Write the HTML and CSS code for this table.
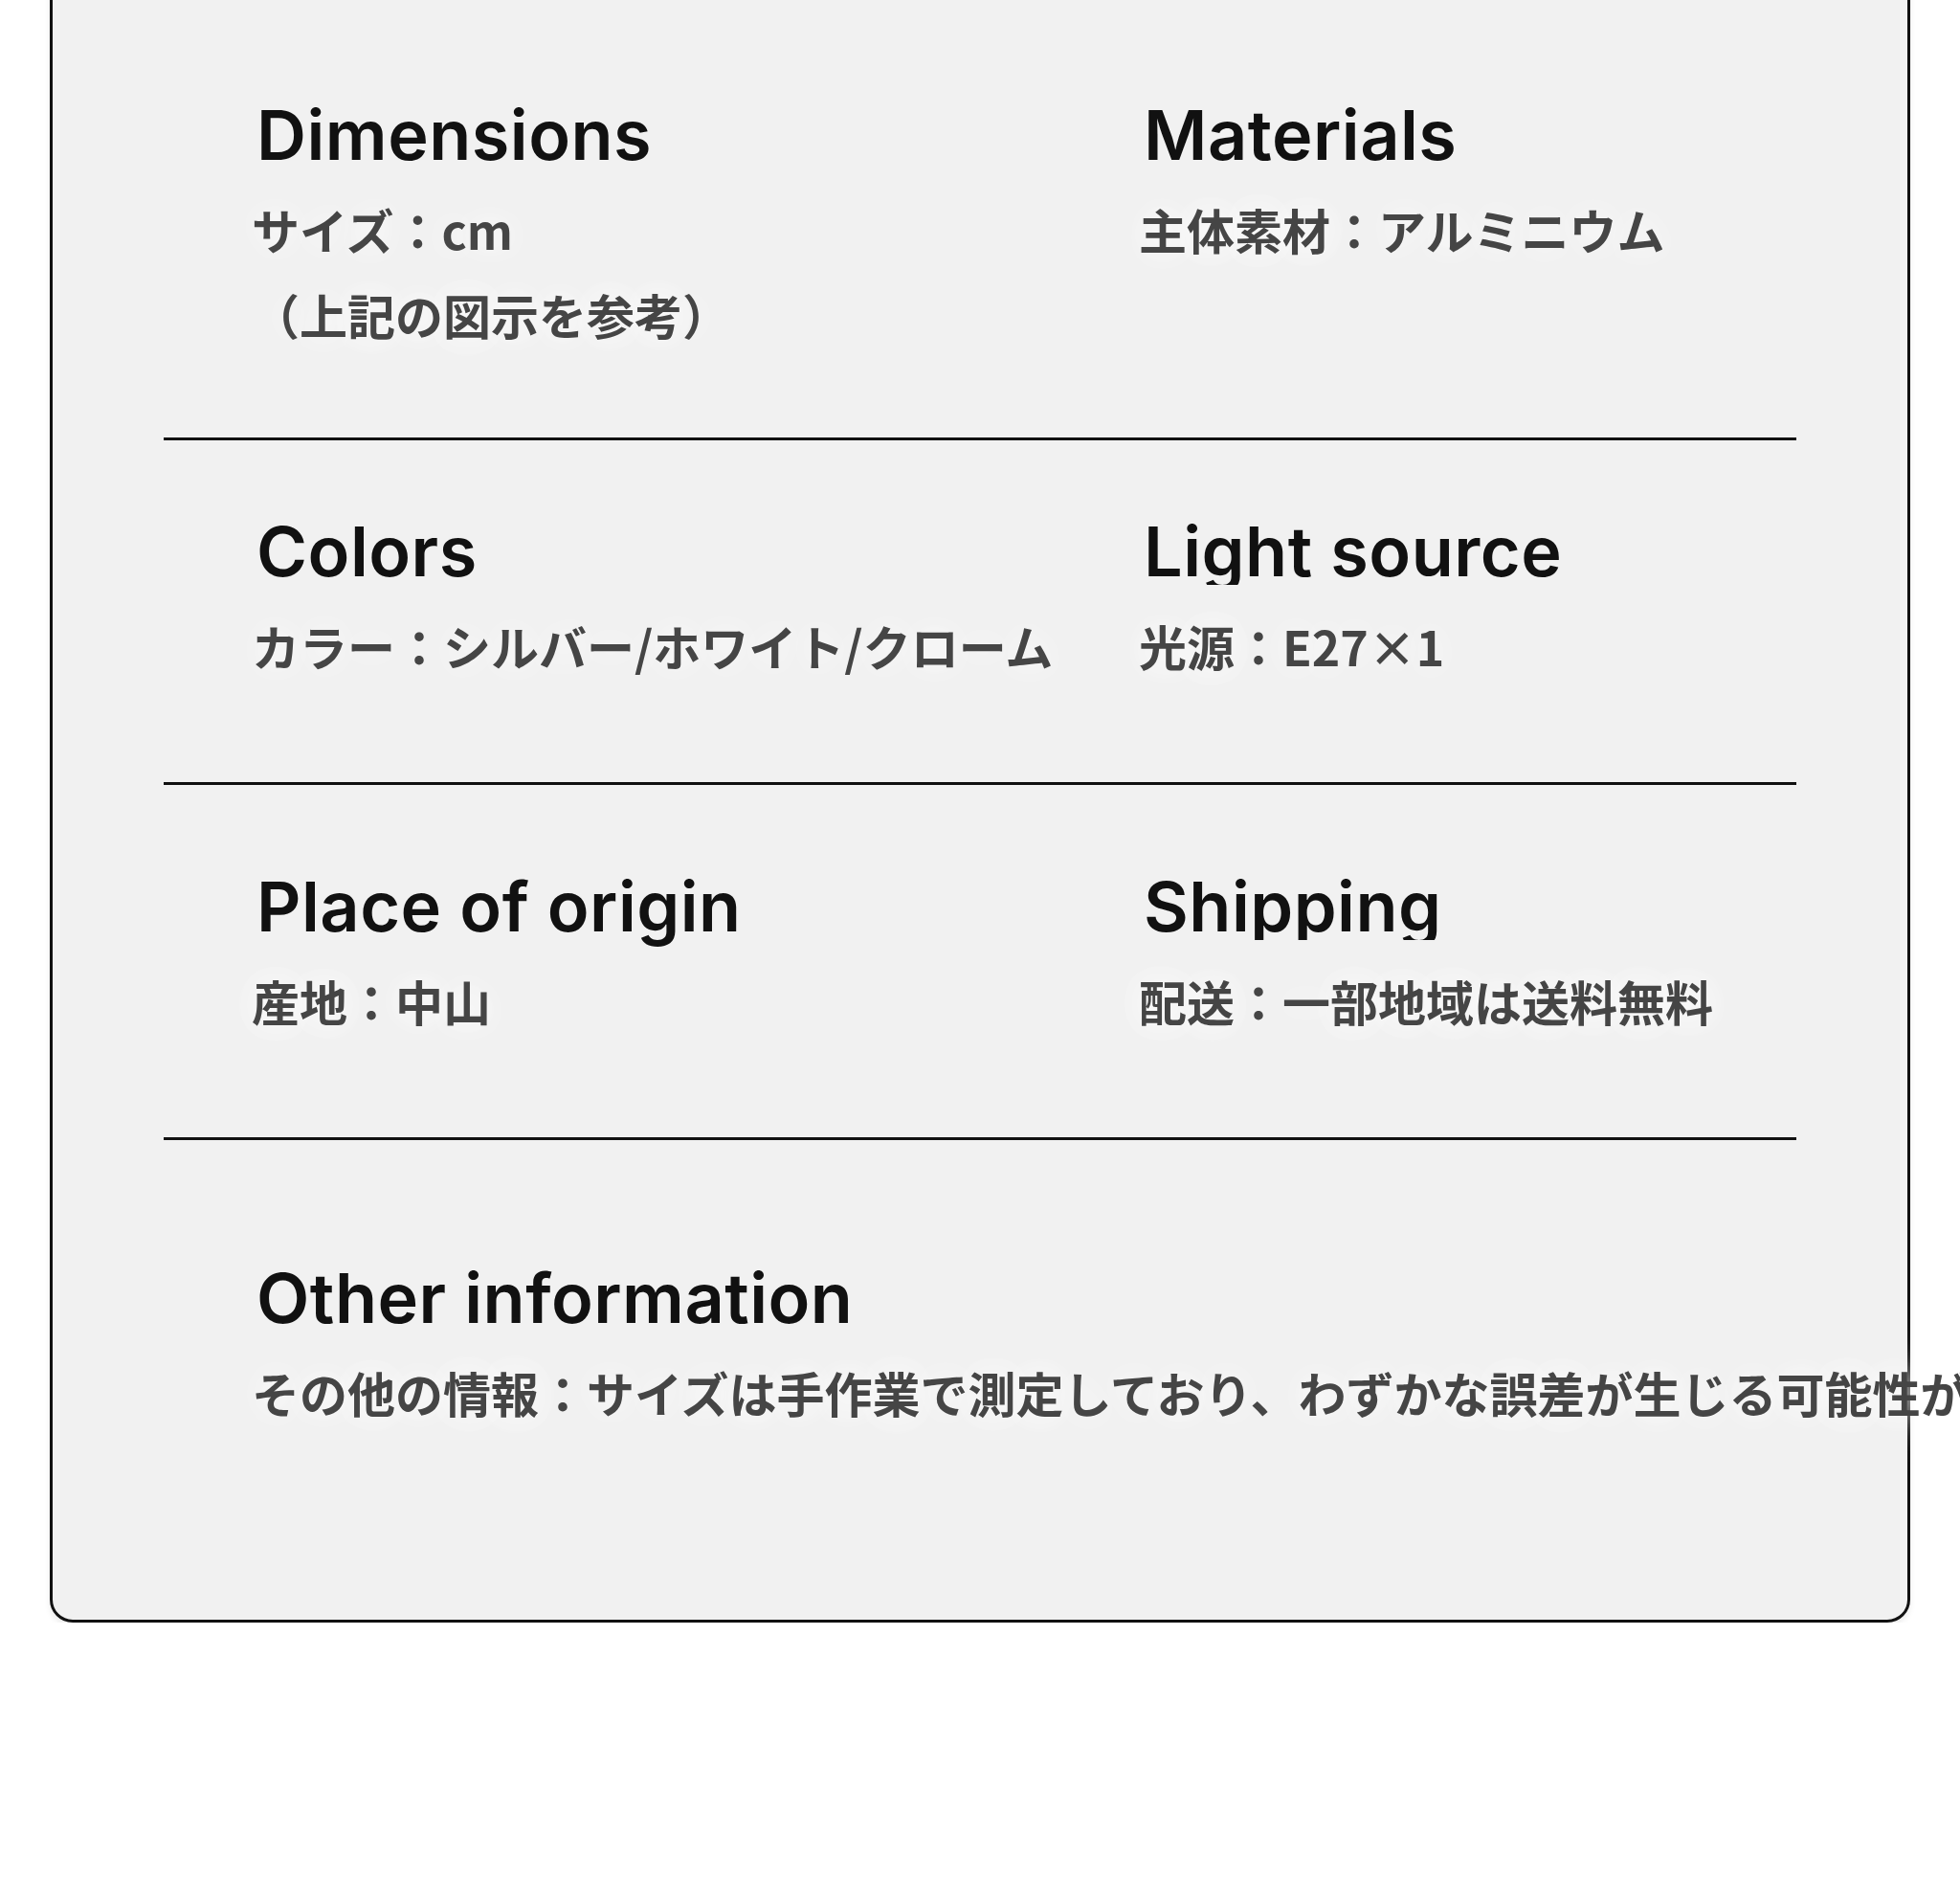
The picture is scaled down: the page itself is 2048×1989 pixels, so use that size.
FILE: index.html
```html
<!DOCTYPE html>
<html lang="ja">
<head>
<meta charset="utf-8">
<title>Product specifications</title>
<link rel="stylesheet" href="styles.css">
</head>
<body>
<main class="card">
  <section class="row row--first">
    <div class="cell">
      <h2 class="title">Dimensions</h2>
      <p class="value">サイズ：cm<br>（上記の図示を参考）</p>
    </div>
    <div class="cell">
      <h2 class="title">Materials</h2>
      <p class="value">主体素材：アルミニウム</p>
    </div>
  </section>
  <hr class="rule">
  <section class="row row--second">
    <div class="cell">
      <h2 class="title">Colors</h2>
      <p class="value">カラー：シルバー/ホワイト/クローム</p>
    </div>
    <div class="cell">
      <h2 class="title title--cut">Light source</h2>
      <p class="value">光源：E27×1</p>
    </div>
  </section>
  <hr class="rule">
  <section class="row row--third">
    <div class="cell">
      <h2 class="title">Place of origin</h2>
      <p class="value">産地：中山</p>
    </div>
    <div class="cell">
      <h2 class="title title--cut">Shipping</h2>
      <p class="value">配送：一部地域は送料無料</p>
    </div>
  </section>
  <hr class="rule">
  <section class="row row--last row--single">
    <div class="cell">
      <h2 class="title">Other information</h2>
      <p class="value value--nowrap">その他の情報：サイズは手作業で測定しており、わずかな誤差が生じる可能性があります。</p>
    </div>
  </section>
</main>
</body>
</html>
```

FILE: styles.css
```css
html, body {
  overflow-x: hidden;
}

body {
  margin: 0;
  background: #ffffff;
  font-family: "Noto Sans CJK JP", "Noto Sans", sans-serif;
}

.card {
  margin: -40px 52px 0;
  background: #f1f1f1;
  border: 3px solid #111111;
  border-radius: 24px;
  padding: 0 116px;
  box-shadow: 0 4px 6px rgba(0, 0, 0, 0.08);
}

.row {
  display: grid;
  grid-template-columns: 927px 1fr;
  padding-left: 97px;
}

.row--single {
  grid-template-columns: 1fr;
}

.row--first { padding-top: 142px; padding-bottom: 84px; }
.row--second { padding-top: 80px; padding-bottom: 98px; }
.row--third { padding-top: 91px; padding-bottom: 98px; }
.row--last { padding-top: 129px; padding-bottom: 193px; }

.title {
  margin: 0;
  font-family: Inter, "Liberation Sans", sans-serif;
  font-weight: 600;
  font-size: 72px;
  line-height: 72px;
  color: #111111;
  letter-spacing: 0.5px;
}

.title--cut {
  clip-path: inset(-30px -30px 1px -30px);
}

.value {
  margin: 18px 0 0 -5px;
  font-family: "Noto Sans CJK JP", sans-serif;
  font-weight: 700;
  font-size: 50px;
  line-height: 89px;
  color: #454545;
  text-shadow: 0 0 30px rgba(255, 255, 255, 0.9), 0 0 60px rgba(255, 255, 255, 0.7);
}

.value--nowrap {
  white-space: nowrap;
}

.rule {
  margin: 0;
  border: 0;
  height: 3px;
  background: #111111;
}
```
